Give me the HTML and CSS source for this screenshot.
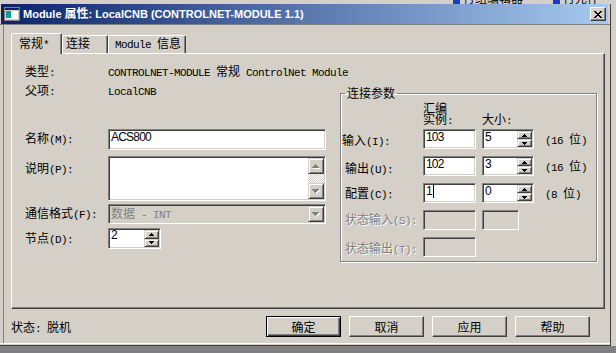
FILE: index.html
```html
<!DOCTYPE html>
<html lang="zh">
<head>
<meta charset="utf-8">
<title>Module 属性</title>
<link rel="stylesheet" href="styles.css">
</head>
<body>
<div class="top">
  <div class="frag f1"><i class="barr"></i><span>行组编辑器</span></div>
  <div class="frag f2"><i class="barr"></i><span>行元件</span></div>
</div>
<div class="mid">
  <div class="dialog">
    <div class="titlebar">
      <svg class="ico" width="16" height="14" viewBox="0 0 16 14" shape-rendering="crispEdges">
        <rect x="0" y="0" width="16" height="14" fill="#808080"/>
        <rect x="1" y="1" width="14" height="12" fill="#d4d0c8"/>
        <rect x="1" y="1" width="14" height="2" fill="#0a246a"/>
        <rect x="2" y="4" width="12" height="8" fill="#fff"/>
        <rect x="2" y="4" width="5" height="7" fill="#00a0a0"/>
      </svg>
      <span class="ttl">Module <span class="tc">属性</span>: LocalCNB (CONTROLNET-MODULE 1.1)</span>
      <button class="close" type="button" aria-label="关闭">
        <svg width="8" height="7" viewBox="0 0 8 7" shape-rendering="crispEdges">
          <rect x="0" y="0" width="2" height="1"/><rect x="6" y="0" width="2" height="1"/>
          <rect x="1" y="1" width="2" height="1"/><rect x="5" y="1" width="2" height="1"/>
          <rect x="2" y="2" width="4" height="1"/>
          <rect x="3" y="3" width="2" height="1"/>
          <rect x="2" y="4" width="4" height="1"/>
          <rect x="1" y="5" width="2" height="1"/><rect x="5" y="5" width="2" height="1"/>
          <rect x="0" y="6" width="2" height="1"/><rect x="6" y="6" width="2" height="1"/>
        </svg>
      </button>
    </div>
    <div class="tsep"></div>
    <div class="body">
      <div class="tabs">
        <div class="tab sel">常规<span class="a">*</span></div>
        <div class="tab t2">连接</div>
        <div class="tab t3"><span class="a">Module </span>信息</div>
      </div>
      <div class="panel">
        <div class="left">
          <div class="row r1"><span class="lbl">类型<span class="a">:</span></span><span class="val"><span class="a">CONTROLNET-MODULE </span>常规<span class="a"> ControlNet Module</span></span></div>
          <div class="row r2"><span class="lbl">父项<span class="a">:</span></span><span class="val"><span class="a">LocalCNB</span></span></div>
          <div class="row r3"><span class="lbl">名称<span class="a">(M):</span></span><div class="edit name"><span class="etext">ACS800</span></div></div>
          <div class="row r4"><span class="lbl">说明<span class="a">(P):</span></span>
            <div class="edit memo">
              <div class="memotxt"></div>
              <div class="vscroll">
                <div class="sbtn"><svg width="8" height="5" viewBox="0 0 8 5" shape-rendering="crispEdges"><path fill="#fff" d="M4 1h1v1h1v1h1v1h1v1H1v-1h1v-1h1v-1h1z"/><path fill="#808080" d="M3 0h1v1h1v1h1v1h1v1H0v-1h1v-1h1v-1h1z"/></svg></div>
                <div class="track"></div>
                <div class="sbtn"><svg width="8" height="5" viewBox="0 0 8 5" shape-rendering="crispEdges"><path fill="#fff" d="M1 1h7v1h-1v1h-1v1h-1v1h-1v-1h-1v-1h-1v-1H1z"/><path fill="#808080" d="M0 0h7v1h-1v1h-1v1h-1v1h-1v-1h-1v-1h-1v-1H0z"/></svg></div>
              </div>
            </div>
          </div>
          <div class="row r5"><span class="lbl">通信格式<span class="a">(F):</span></span>
            <div class="edit combo dis">
              <span class="ctext">数据<span class="a"> - INT</span></span>
              <div class="sbtn dd"><svg width="8" height="5" viewBox="0 0 8 5" shape-rendering="crispEdges"><path fill="#fff" d="M1 1h7v1h-1v1h-1v1h-1v1h-1v-1h-1v-1h-1v-1H1z"/><path fill="#808080" d="M0 0h7v1h-1v1h-1v1h-1v1h-1v-1h-1v-1h-1v-1H0z"/></svg></div>
            </div>
          </div>
          <div class="row r6"><span class="lbl">节点<span class="a">(D):</span></span>
            <div class="edit spin node"><span class="etext">2</span>
              <div class="sb">
                <b class="sbb"><svg width="5" height="3" viewBox="0 0 5 3" shape-rendering="crispEdges"><path d="M2 0h1v1h1v1h1v1H0v-1h1v-1h1z"/></svg></b>
                <b class="sbb"><svg width="5" height="3" viewBox="0 0 5 3" shape-rendering="crispEdges"><path d="M0 0h5v1h-1v1h-1v1h-1v-1h-1v-1H0z"/></svg></b>
              </div>
            </div>
          </div>
        </div>

        <fieldset class="group">
          <legend>连接参数</legend>
          <div class="ghead"><span class="gh1">汇编<br>实例<span class="a">:</span></span><span class="gh2">大小<span class="a">:</span></span></div>

          <div class="grow gr1">
            <span class="glbl">输入<span class="a">(I):</span></span>
            <div class="edit g1"><span class="etext">103</span></div>
            <div class="edit spin g2"><span class="etext">5</span>
              <div class="sb">
                <b class="sbb"><svg width="5" height="3" viewBox="0 0 5 3" shape-rendering="crispEdges"><path d="M2 0h1v1h1v1h1v1H0v-1h1v-1h1z"/></svg></b>
                <b class="sbb"><svg width="5" height="3" viewBox="0 0 5 3" shape-rendering="crispEdges"><path d="M0 0h5v1h-1v1h-1v1h-1v-1h-1v-1H0z"/></svg></b>
              </div>
            </div>
            <span class="unit"><span class="a">(16 </span>位<span class="a">)</span></span>
          </div>

          <div class="grow gr2">
            <span class="glbl">输出<span class="a">(U):</span></span>
            <div class="edit g1"><span class="etext">102</span></div>
            <div class="edit spin g2"><span class="etext">3</span>
              <div class="sb">
                <b class="sbb"><svg width="5" height="3" viewBox="0 0 5 3" shape-rendering="crispEdges"><path d="M2 0h1v1h1v1h1v1H0v-1h1v-1h1z"/></svg></b>
                <b class="sbb"><svg width="5" height="3" viewBox="0 0 5 3" shape-rendering="crispEdges"><path d="M0 0h5v1h-1v1h-1v1h-1v-1h-1v-1H0z"/></svg></b>
              </div>
            </div>
            <span class="unit"><span class="a">(16 </span>位<span class="a">)</span></span>
          </div>

          <div class="grow gr3">
            <span class="glbl">配置<span class="a">(C):</span></span>
            <div class="edit g1"><span class="etext">1<i class="caret"></i></span></div>
            <div class="edit spin g2"><span class="etext">0</span>
              <div class="sb">
                <b class="sbb"><svg width="5" height="3" viewBox="0 0 5 3" shape-rendering="crispEdges"><path d="M2 0h1v1h1v1h1v1H0v-1h1v-1h1z"/></svg></b>
                <b class="sbb"><svg width="5" height="3" viewBox="0 0 5 3" shape-rendering="crispEdges"><path d="M0 0h5v1h-1v1h-1v1h-1v-1h-1v-1H0z"/></svg></b>
              </div>
            </div>
            <span class="unit"><span class="a">(8 </span>位<span class="a">)</span></span>
          </div>

          <div class="grow gr4">
            <span class="glbl gray">状态输入<span class="a">(S):</span></span>
            <div class="edit g1 dis"></div>
            <div class="edit g2s dis"></div>
          </div>

          <div class="grow gr5">
            <span class="glbl gray">状态输出<span class="a">(T):</span></span>
            <div class="edit g1 dis"></div>
          </div>
        </fieldset>
      </div>
      <div class="footer">
        <span class="status">状态<span class="a">: </span>脱机</span>
        <div class="btns">
          <button class="btn def" type="button">确定</button>
          <button class="btn" type="button">取消</button>
          <button class="btn" type="button">应用</button>
          <button class="btn" type="button">帮助</button>
        </div>
      </div>
    </div>
    <div class="dedge"></div>
  </div>
  <div class="rstrip"></div>
</div>
<div class="bottom"></div>
</body>
</html>
```

FILE: styles.css
```css
* { box-sizing: border-box; margin: 0; padding: 0; }
html, body { width: 616px; height: 353px; overflow: hidden; }
body {
  background: #d4d0c8;
  color: #000;
  font-family: "Noto Sans CJK SC", "Noto Sans CJK JP", sans-serif;
  font-size: 12px;
  line-height: 12px;
}
.a {
  font-family: "Liberation Mono", "DejaVu Sans Mono", monospace;
  font-size: 11px;
  letter-spacing: -0.6px;
  white-space: pre;
  line-height: 0;
}
.gray { color: #808080; text-shadow: 1px 1px 0 #fff; }

/* strip above the dialog */
.top { height: 4px; overflow: hidden; display: flex; align-items: flex-end; }
.frag { flex: none; display: flex; align-items: flex-end; gap: 3px; height: 12px; white-space: nowrap; }
.f1 { margin-left: 453px; }
.f2 { margin-left: 30px; }
.barr { display: block; width: 7px; height: 4px; background: #1a3cc8; }

.mid { display: flex; height: 342px; }
.dialog {
  width: 611px; height: 342px; flex: none;
  display: flex; flex-direction: column;
  border-right: 1px solid #404040;
}
.titlebar {
  flex: none; height: 20px; width: 607px; margin-left: 1px;
  display: flex; align-items: center;
  background: linear-gradient(90deg, #0a246a, #a6caf0);
  color: #fff;
}
.ico { flex: none; margin-left: 3px; }
.ttl {
  flex: 1; margin-left: 3px;
  font: bold 11px/20px "Liberation Sans", Arial, sans-serif;
  white-space: pre;
}
.tc { font-family: "Noto Sans CJK SC", sans-serif; font-size: 12px; font-weight: bold; line-height: 0; }
.close {
  flex: none; width: 16px; height: 14px; margin-right: 2px;
  background: #d4d0c8;
  border: 1px solid; border-color: #fff #404040 #404040 #fff;
  box-shadow: inset -1px -1px 0 #808080;
  display: flex; align-items: center; justify-content: center;
}
.tsep { flex: none; height: 1px; background: #808080; }
.body {
  flex: none; height: 318px;
  margin-left: 3px; border-left: 1px solid #808080;
  padding-top: 8px;
}
.dedge { flex: none; height: 3px; border-top: 1px solid #fff; border-bottom: 1px solid #404040; }
.rstrip { flex: 1; background: #d4d0c8; }
.bottom { height: 7px; background: #808080; }

/* tabs */
.tabs { display: flex; align-items: flex-end; height: 20px; margin-left: 7px; }
.tab {
  flex: none; height: 18px; padding-top: 1px;
  background: #d4d0c8; white-space: nowrap;
  border: 1px solid; border-bottom: 0;
  border-color: #fff #404040 #404040 #fff;
  box-shadow: inset -1px 0 0 #808080;
  border-radius: 2px 2px 0 0;
}
.tab.sel {
  width: 51px; height: 21px; margin-bottom: -1px;
  padding: 3px 0 0 7px;
  position: relative; z-index: 1;
}
.t2 { width: 46px; padding-left: 3px; }
.t3 { width: 78px; padding-left: 6px; }

/* panel */
.panel {
  width: 594px; height: 256px; margin-left: 7px;
  border: 1px solid; border-color: #fff #404040 #404040 #fff;
  box-shadow: inset -1px -1px 0 #808080;
  display: flex; align-items: flex-start;
}
.left { flex: none; width: 301px; margin: 11px 0 0 13px; }
.row { display: flex; align-items: flex-start; }
.lbl { flex: none; width: 83px; white-space: nowrap; }
.val { white-space: nowrap; }
.r1, .r2 { height: 12px; }
.r2 { margin-top: 7px; }
.r3 { margin-top: 33px; height: 21px; }
.r3 .lbl { padding-top: 3px; }
.r4 { margin-top: 6px; height: 45px; }
.r4 .lbl { padding-top: 6px; }
.r5 { margin-top: 3px; height: 20px; }
.r5 .lbl { padding-top: 3px; }
.r6 { margin-top: 4px; height: 21px; }
.r6 .lbl { padding-top: 4px; }

/* sunken edit boxes */
.edit {
  flex: none;
  background: #fff;
  border: 1px solid; border-color: #808080 #fff #fff #808080;
  box-shadow: inset 1px 1px 0 #404040, inset -1px -1px 0 #d4d0c8;
  padding: 1px;
  display: flex; align-items: flex-start;
}
.edit.dis { background: #d4d0c8; }
.etext {
  flex: 1; padding-left: 1px;
  font: 12px/12px "Liberation Sans", Arial, sans-serif;
  letter-spacing: -0.8px;
  white-space: nowrap;
}
.name { width: 218px; height: 21px; }
.memo { width: 218px; height: 45px; }
.memotxt { flex: 1; align-self: stretch; }
.vscroll { flex: none; width: 16px; align-self: stretch; display: flex; flex-direction: column; }
.sbtn {
  flex: none; height: 16px;
  background: #d4d0c8;
  border: 1px solid; border-color: #d4d0c8 #404040 #404040 #d4d0c8;
  box-shadow: inset 1px 1px 0 #fff, inset -1px -1px 0 #808080;
  display: flex; align-items: center; justify-content: center;
}
.track { flex: 1; background: repeating-conic-gradient(#fff 0 25%, #d4d0c8 0 50%) 0 0 / 2px 2px; }
.combo { width: 218px; height: 20px; }
.ctext { flex: 1; color: #808080; padding: 1px 0 0 1px; white-space: nowrap; }
.dd { width: 16px; }

.spin .sb { flex: none; width: 15px; align-self: stretch; display: flex; flex-direction: column; }
.sbb {
  flex: 1;
  background: #d4d0c8;
  border: 1px solid; border-color: #d4d0c8 #404040 #404040 #d4d0c8;
  box-shadow: inset 1px 1px 0 #fff, inset -1px -1px 0 #808080;
  display: flex; align-items: center; justify-content: center;
}
.node { width: 53px; height: 21px; }
.node .etext { margin-top: -1px; }

/* group box */
.group {
  flex: none; width: 257px; min-width: 0;
  margin: 33px 0 0 14px;
  padding: 0 0 4px 0;
  border: 1px solid #808080;
  box-shadow: inset 1px 1px 0 #fff, 1px 1px 0 #fff;
}
.group legend { margin-left: 4px; padding: 0 2px; line-height: 12px; }
.ghead { display: flex; align-items: flex-end; margin-top: 3px; padding-left: 82px; line-height: 11px; }
.gh1 { width: 59px; }
.grow { display: flex; align-items: flex-start; height: 20px; margin-top: 7px; }
.gr1 { margin-top: 5px; }
.glbl { flex: none; width: 82px; padding: 4px 0 0 4px; white-space: nowrap; }
.gr1 .glbl { padding: 5px 0 0 1px; }
.gr2 .glbl { padding-top: 6px; }
.gr4 .glbl { padding-top: 3px; }
.gr5 .glbl { padding-top: 5px; }
.g1 { width: 53px; height: 20px; }
.g2 { width: 52px; height: 20px; margin-left: 6px; }
.g2s { width: 37px; height: 20px; margin-left: 6px; }
.unit { margin-left: 11px; align-self: center; white-space: nowrap; }
.caret { display: inline-block; width: 1px; height: 13px; background: #000; vertical-align: -3px; margin-left: 1px; }

/* footer */
.footer { display: flex; align-items: center; height: 21px; margin-top: 7px; padding-left: 7px; }
.status { flex: none; width: 255px; white-space: nowrap; }
.btns { display: flex; gap: 8px; }
.btn {
  width: 75px; height: 21px;
  font: inherit; color: #000;
  background: #d4d0c8;
  border: 1px solid; border-color: #fff #404040 #404040 #fff;
  box-shadow: inset -1px -1px 0 #808080;
  display: flex; align-items: center; justify-content: center;
}
.btn.def {
  border-color: #000;
  box-shadow: inset 1px 1px 0 #fff, inset -1px -1px 0 #404040, inset -2px -2px 0 #808080;
}
```
